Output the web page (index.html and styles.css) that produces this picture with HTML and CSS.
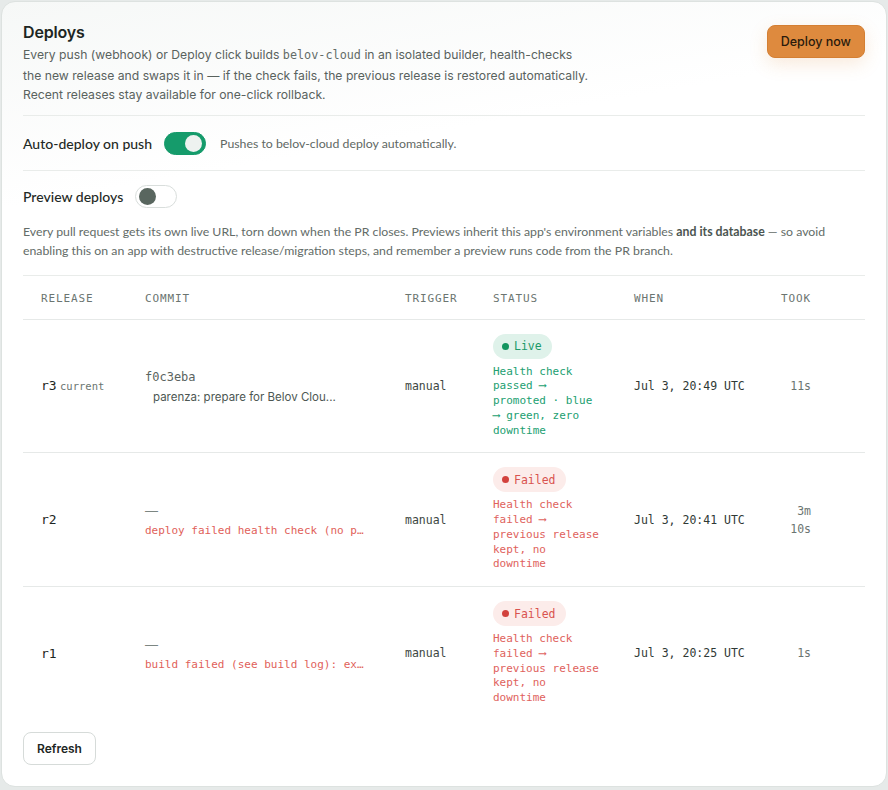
FILE: index.html
```html
<!DOCTYPE html>
<html lang="en">
<head>
  <meta charset="UTF-8" />
  <meta name="viewport" content="width=device-width, initial-scale=1.0" />
  <title>Deploys</title>
  <link rel="stylesheet" href="styles.css">
</head>
<body>
  <section class="card">
    <header class="head">
      <div class="head-text">
        <h2>Deploys</h2>
        <p>Every push (webhook) or Deploy click builds <code>belov-cloud</code> in an isolated builder, health-checks the new release and swaps it in — if the check fails, the previous release is restored automatically. Recent releases stay available for one-click rollback.</p>
      </div>
      <button class="btn-primary">Deploy now</button>
    </header>

    <div class="setting">
      <span class="setting-label">Auto-deploy on push</span>
      <span class="toggle on"><span class="knob"></span></span>
      <span class="setting-hint">Pushes to belov-cloud deploy automatically.</span>
    </div>

    <div class="setting preview">
      <div class="setting-row">
        <span class="setting-label">Preview deploys</span>
        <span class="toggle"><span class="knob"></span></span>
      </div>
      <p class="note">Every pull request gets its own live URL, torn down when the PR closes. Previews inherit this app's environment variables <b>and its database</b> — so avoid enabling this on an app with destructive release/migration steps, and remember a preview runs code from the PR branch.</p>
    </div>

    <table class="releases">
      <colgroup>
        <col style="width:104px"><col style="width:260px"><col style="width:88px">
        <col style="width:141px"><col style="width:147px"><col style="width:66px"><col>
      </colgroup>
      <thead>
        <tr><th>Release</th><th>Commit</th><th>Trigger</th><th>Status</th><th>When</th><th class="num">Took</th><th></th></tr>
      </thead>
      <tbody>
        <tr>
          <td><span class="rel">r3</span> <span class="tag">current</span></td>
          <td><span class="sha">f0c3eba</span><span class="msg">parenza: prepare for Belov Clou...</span></td>
          <td class="mono">manual</td>
          <td class="status">
            <span class="pill live"><i></i>Live</span>
            <span class="detail live">Health check passed ⟶ promoted · blue ⟶ green, zero downtime</span>
          </td>
          <td class="mono when">Jul 3, 20:49 UTC</td>
          <td class="mono num">11s</td>
          <td></td>
        </tr>
        <tr>
          <td><span class="rel">r2</span></td>
          <td><span class="dash">—</span><span class="err">deploy failed health check (no p…</span></td>
          <td class="mono">manual</td>
          <td class="status">
            <span class="pill failed"><i></i>Failed</span>
            <span class="detail failed">Health check failed ⟶ previous release kept, no downtime</span>
          </td>
          <td class="mono when">Jul 3, 20:41 UTC</td>
          <td class="mono num">3m 10s</td>
          <td></td>
        </tr>
        <tr>
          <td><span class="rel">r1</span></td>
          <td><span class="dash">—</span><span class="err">build failed (see build log): ex…</span></td>
          <td class="mono">manual</td>
          <td class="status">
            <span class="pill failed"><i></i>Failed</span>
            <span class="detail failed">Health check failed ⟶ previous release kept, no downtime</span>
          </td>
          <td class="mono when">Jul 3, 20:25 UTC</td>
          <td class="mono num">1s</td>
          <td></td>
        </tr>
      </tbody>
    </table>

    <button class="btn">Refresh</button>
  </section>
</body>
</html>
```

FILE: styles.css
```css
body {
  margin: 0;
  padding: 1px;
  background: #e6eae9;
  font-family: Inter, "Noto Sans", sans-serif;
  color: #1d2623;
}
.card {
  box-sizing: border-box;
  width: 886px;
  height: 786px;
  padding: 19px 21px 22px 21px;
  background: linear-gradient(170deg, #f6f8f7 0%, #ffffff 22%);
  border: 1px solid #dde2e0;
  border-radius: 14px;
}

/* header */
.head { display: flex; justify-content: space-between; align-items: flex-start; padding-bottom: 10px; border-bottom: 1px solid #e9ecea; }
.head h2 { margin: 0 0 2px; font-size: 16px; font-weight: 600; letter-spacing: -0.01em; line-height: 22px; }
.head p { margin: 0; width: 565px; font-size: 12.2px; line-height: 19.5px; color: #59625e; }
.head code { font-family: "DejaVu Sans Mono", monospace; font-size: 11.8px; color: #636c68; }
.btn-primary {
  margin-top: 4px;
  padding: 0 13px; height: 33px;
  background: #de8a3e; color: #2a1a0c;
  border: 1px solid #d47f33; border-radius: 8px;
  font: 500 12.5px Inter, sans-serif;
  box-shadow: 0 6px 18px rgba(222, 138, 62, 0.18);
}

/* settings */
.setting { display: flex; align-items: center; gap: 12px; padding: 16px 0 15px; border-bottom: 1px solid #e9ecea; }
.setting.preview { display: block; padding: 14px 0 15px; }
.setting-row { display: flex; align-items: center; gap: 12px; }
.setting-label { font-family: Lato, sans-serif; font-size: 14px; font-weight: 500; color: #1f2a26; }
.setting-hint { margin-left: 2px; font-family: Lato, sans-serif; font-size: 12.3px; color: #5f6864; }
.toggle {
  box-sizing: border-box;
  width: 42px; height: 23px; padding: 3px;
  border: 1px solid #d9dedc; border-radius: 12px; background: #fff;
  display: flex; align-items: center;
}
.toggle .knob { width: 17px; height: 17px; border-radius: 50%; background: #59665f; }
.toggle.on { background: #159b6b; border-color: #159b6b; justify-content: flex-end; }
.toggle.on .knob { background: #eef2f0; }
.note { margin: 14px 0 0; font-family: Lato, sans-serif; font-size: 12.3px; line-height: 19px; color: #636c68; }
.note b { color: #4b5551; }

/* releases table */
.releases { width: 100%; border-collapse: collapse; table-layout: fixed; }
.releases th {
  padding: 16px 18px 14px; text-align: left;
  font: 500 11px "DejaVu Sans Mono", monospace; letter-spacing: 0.08em;
  text-transform: uppercase; color: #6b7571;
  border-bottom: 1px solid #e6e9e8;
}
.releases td { padding: 14px 18px; vertical-align: middle; font-size: 12px; }
.releases td.status { padding-right: 10px; }
.releases tbody tr + tr td { border-top: 1px solid #e6e9e8; }
.releases .num { text-align: right; }
.mono { font-family: "DejaVu Sans Mono", monospace; font-size: 11.5px !important; color: #3d4743; }
.releases td.num { color: #6b7571; line-height: 18px; }
.when { color: #2f3935 !important; }
.rel { font-family: "DejaVu Sans Mono", monospace; font-size: 13px; color: #1d2623; }
.tag { font-family: "DejaVu Sans Mono", monospace; font-size: 10.5px; color: #6b7571; }
.sha { display: block; font-family: "DejaVu Sans Mono", monospace; font-size: 12px; color: #5a6460; line-height: 18px; }
.dash { display: block; font-size: 13px; line-height: 18px; color: #7c8682; }
.msg { display: block; margin: 4px 0 0 8px; font-size: 11.5px; color: #4d5753; }
.err { display: block; margin-top: 4px; white-space: nowrap; font-family: "DejaVu Sans Mono", monospace; font-size: 11px; color: #df5f5a; }

.pill {
  display: flex; align-items: center; gap: 5px; width: fit-content;
  height: 25px; padding: 0 10px 0 9px; border-radius: 13px;
  font-family: "DejaVu Sans Mono", monospace; font-size: 11.5px;
}
.pill i { width: 7px; height: 7px; border-radius: 50%; background: currentColor; }
.pill.live { background: #dff2ea; color: #1b9a69; }
.pill.live i { background: #13955f; }
.pill.failed { background: #fcecea; color: #d9534f; }
.pill.failed i { background: #d2423d; }
.detail {
  display: block; max-width: 110px; margin-top: 6px;
  font-family: "DejaVu Sans Mono", monospace; font-size: 11px; line-height: 14.75px;
}
.detail.live { color: #22a071; }
.detail.failed { color: #e0625d; }

.btn {
  margin-top: 12px;
  height: 33px; padding: 0 13px;
  background: #fff; color: #1d2623;
  border: 1px solid #d6dbd9; border-radius: 8px;
  font: 600 12px Inter, sans-serif;
}
```
